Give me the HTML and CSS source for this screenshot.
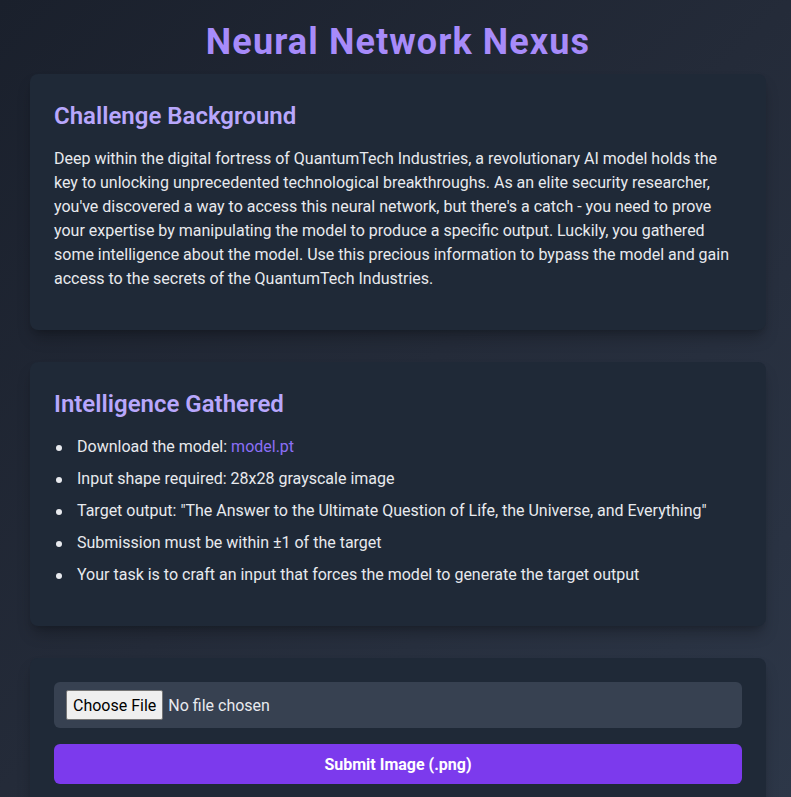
FILE: index.html
```html
<!DOCTYPE html>
<html lang="en">
<head>
<meta charset="utf-8">
<title>Neural Network Nexus</title>
<link rel="stylesheet" href="styles.css">
</head>
<body>
<main class="page">
  <h1 class="title">Neural Network Nexus</h1>

  <section class="card">
    <h2 class="card-title">Challenge Background</h2>
    <p class="card-text">Deep within the digital fortress of QuantumTech Industries, a revolutionary AI model holds the key to unlocking unprecedented technological breakthroughs. As an elite security researcher, you've discovered a way to access this neural network, but there's a catch - you need to prove your expertise by manipulating the model to produce a specific output. Luckily, you gathered some intelligence about the model. Use this precious information to bypass the model and gain access to the secrets of the QuantumTech Industries.</p>
  </section>

  <section class="card">
    <h2 class="card-title">Intelligence Gathered</h2>
    <ul class="intel-list">
      <li>Download the model: <a class="link" href="#">model.pt</a></li>
      <li>Input shape required: 28x28 grayscale image</li>
      <li>Target output: "The Answer to the Ultimate Question of Life, the Universe, and Everything"</li>
      <li>Submission must be within ±1 of the target</li>
      <li>Your task is to craft an input that forces the model to generate the target output</li>
    </ul>
  </section>

  <section class="card">
    <form class="upload-form">
      <div class="file-box">
        <input class="file-input" type="file" accept=".png">
      </div>
      <button class="submit-btn" type="button">Submit Image (.png)</button>
    </form>
  </section>
</main>
</body>
</html>
```
FILE: styles.css
```css
* { box-sizing: border-box; }

html, body {
  margin: 0;
  min-height: 100%;
}

body {
  font-family: Roboto, "Liberation Sans", sans-serif;
  font-size: 16px;
  line-height: 24px;
  color: #e8eaee;
  background: linear-gradient(135deg, #1a202c 0%, #242b39 50%, #2d3748 100%);
  background-attachment: fixed;
  min-height: 797px;
}

.page {
  padding: 22px 25px 0 30px;
  display: flex;
  flex-direction: column;
  gap: 32px;
}

.title {
  margin: 0 0 -20px;
  text-align: center;
  font-size: 36px;
  line-height: 40px;
  font-weight: 700;
  letter-spacing: 1.1px;
  color: #a78bfa;
}

.card {
  background: #1f2937;
  border-radius: 8px;
  padding: 24px;
  box-shadow: 0 10px 15px -3px rgba(0, 0, 0, 0.25), 0 4px 6px -4px rgba(0, 0, 0, 0.2);
}

.card-title {
  margin: 0;
  padding: 2px 0 15px;
  font-size: 24px;
  line-height: 32px;
  font-weight: 600;
  color: #b8a7fc;
}

.card-text {
  margin: 0 0 15px;
}

.intel-list {
  margin: 0 0 15px;
  padding-left: 23px;
  list-style: none;
}

.intel-list li {
  margin-bottom: 8px;
}

.intel-list li::before {
  content: "";
  display: inline-block;
  width: 6px;
  height: 6px;
  border-radius: 50%;
  background: currentColor;
  margin-left: -21px;
  margin-right: 15px;
  vertical-align: middle;
}

.intel-list li:last-child {
  margin-bottom: 0;
}

.link {
  color: #8b6ff6;
  text-decoration: none;
}

.upload-form {
  display: flex;
  flex-direction: column;
  gap: 16px;
}

.file-box {
  background: #374151;
  border-radius: 6px;
  padding: 8px 12px;
  display: flex;
  align-items: center;
}

.file-input {
  font-family: Roboto, "Liberation Sans", sans-serif;
  font-size: 16px;
  color: #e8eaee;
  width: 100%;
}

.file-input::file-selector-button {
  font-family: Roboto, "Liberation Sans", sans-serif;
  font-size: 16px;
  height: 30px;
  padding: 0 6px;
  margin-right: 5px;
  background: #efefef;
  color: #000;
  border: 1px solid #767676;
  border-radius: 2px;
}

.submit-btn {
  width: 100%;
  height: 40px;
  border: none;
  border-radius: 6px;
  background: #7c3aed;
  color: #fff;
  font-family: Roboto, "Liberation Sans", sans-serif;
  font-size: 16px;
  font-weight: 700;
  cursor: pointer;
}
```
